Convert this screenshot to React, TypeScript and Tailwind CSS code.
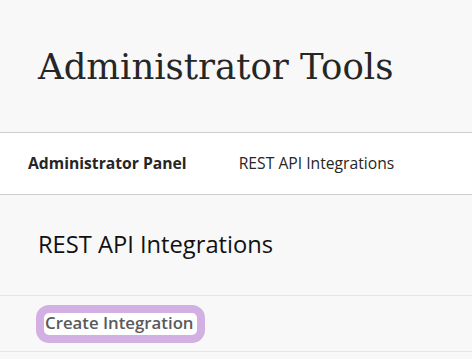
import React from "react";

export default function App() {
  return (
    <div className="w-[472px] h-[359px] overflow-hidden bg-[#f8f8f8] font-['Open_Sans',sans-serif]">
      <header className="h-[133px] flex items-center pl-[38px] border-b border-[#cdcdcd]">
        <h1 className="font-['DejaVu_Serif',serif] text-[35.5px] text-[#262626] leading-none mt-[1px]">
          Administrator Tools
        </h1>
      </header>
      <nav className="h-[62px] bg-white border-b border-[#cdcdcd] flex items-center pl-[28px] text-[15.7px] text-[#262626]">
        <span className="font-bold">Administrator Panel</span>
        <span className="ml-[52px]">REST API Integrations</span>
      </nav>
      <section className="h-[101px] flex items-center pl-[38px] border-b border-[#e6e6e6]">
        <h2 className="text-[23.7px] text-[#111] leading-none">REST API Integrations</h2>
      </section>
      <div className="h-[56px] flex items-center pl-[36px] border-b border-[#e6e6e6]">
        <button
          type="button"
          className="w-[169px] h-[38px] rounded-[13px] border-[8px] border-[#d3b0e3] bg-white pl-[1px] text-left text-[16.8px] font-semibold text-[#5a5a5a] leading-none"
        >
          Create Integration
        </button>
      </div>
    </div>
  );
}
